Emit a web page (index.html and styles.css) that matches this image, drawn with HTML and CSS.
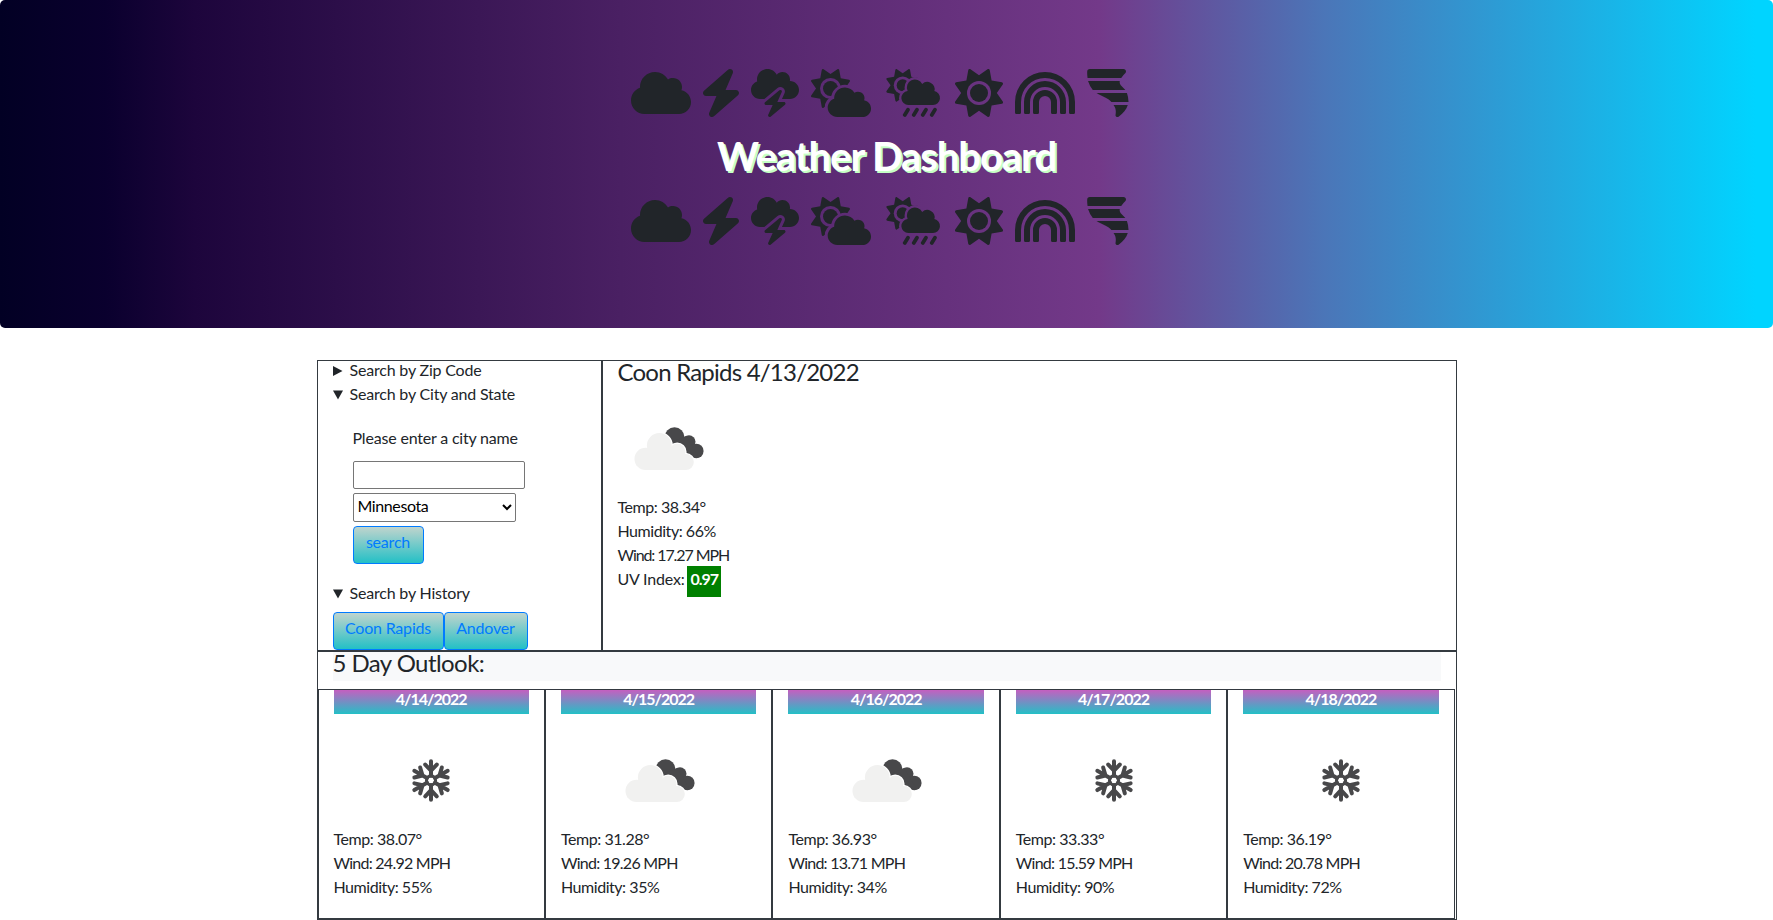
FILE: index.html
```html
<!DOCTYPE html>
<html lang="en">
<head>
<meta charset="utf-8">
<title>Weather Dashboard</title>
<link rel="stylesheet" href="styles.css">
</head>
<body>
<svg class="defs" width="0" height="0" aria-hidden="true">
  <defs>
    <path id="star" d="M509.3 347L446.1 256l63.2-91c6.300-9.100 1.100-21.700-9.900-23.700l-109-19.700l-19.700-109c-2-10.900-14.600-16.200-23.700-9.800L256 65.900L165 2.700c-9.100-6.300-21.700-1.100-23.700 9.800L121.600 121.600L12.600 141.300C1.600 143.200-3.600 155.900 2.700 165L65.900 256l-63.200 91c-6.300 9.100-1.100 21.700 9.900 23.700l109 19.700l19.700 109c2 10.900 14.600 16.200 23.700 9.800L256 446.100l91 63.200c9.100 6.300 21.800 1.100 23.700-9.800l19.700-109l109-19.700C510.400 368.800 515.600 356.100 509.300 347z"/>
    <path id="cloudshape" d="M96.2 200.1C96.07 197.4 96 194.7 96 192C96 103.6 167.6 32 256 32C315.3 32 367 64.25 394.7 112.2C409.9 101.1 428.3 96 448 96C501 96 544 138.1 544 192C544 204.2 541.7 215.8 537.6 226.6C596 238.4 640 290.1 640 352C640 422.7 582.7 480 512 480H144C64.47 480 0 415.5 0 336C0 273.2 40.17 219.8 96.2 200.1z"/>
    <path id="raincloud" d="M271 384a75 75 0 0 1-8-149.600A84 84 0 0 1 418 161a78 78 0 0 1 130 74.600A75 75 0 0 1 533 384z"/>
    <mask id="mSun" maskUnits="userSpaceOnUse" x="0" y="0" width="512" height="512"><rect width="512" height="512" fill="#fff"/><circle cx="256" cy="256" r="128" fill="#000"/></mask>
    <mask id="mCs" maskUnits="userSpaceOnUse" x="0" y="0" width="640" height="512"><rect width="640" height="512" fill="#fff"/><use href="#cloudshape" transform="translate(178 176) scale(.722 .7)" stroke="#000" stroke-width="88"/></mask>
    <mask id="mCsRing" maskUnits="userSpaceOnUse" x="0" y="0" width="640" height="512"><rect width="640" height="512" fill="#fff"/><circle cx="208" cy="208" r="112" fill="#000"/></mask>
    <mask id="mCr" maskUnits="userSpaceOnUse" x="0" y="0" width="640" height="512"><rect width="640" height="512" fill="#fff"/><use href="#raincloud" stroke="#000" stroke-width="50"/></mask>
    <mask id="mCrRing" maskUnits="userSpaceOnUse" x="0" y="0" width="640" height="512"><rect width="640" height="512" fill="#fff"/><circle cx="210" cy="174" r="95" fill="#000"/></mask>

    <symbol id="i-cloud" viewBox="0 0 640 512"><use href="#cloudshape"/></symbol>
    <symbol id="i-bolt" viewBox="0 0 384 512"><path d="M240.5 224H352C365.3 224 377.3 232.3 381.1 244.7C386.6 257.2 383.1 271.3 373.1 280.1L117.1 504.1C105.8 513.9 89.27 514.7 77.19 505.9C65.1 497.1 60.7 481.1 66.59 467.4L143.5 288H31.1C18.67 288 6.733 279.7 2.044 267.3C-2.645 254.8 .8944 240.7 10.93 231.9L266.9 7.918C278.2-1.92 294.7-2.669 306.8 6.114C318.9 14.9 323.3 30.87 317.4 44.61L240.5 224z"/></symbol>
    <symbol id="i-storm" viewBox="0 0 512 512"><path d="M352 351.1h-71.25l47.44-105.4c3.062-6.781 1.031-14.81-4.906-19.31c-5.969-4.469-14.22-4.312-19.94 .4687l-153.6 128c-5.156 4.312-7.094 11.41-4.781 17.72c2.281 6.344 8.281 10.56 15.03 10.56h71.25l-47.44 105.4c-3.062 6.781-1.031 14.81 4.906 19.31C191.6 510.9 194.1 512 198.4 512c3.656 0 7.281-1.25 10.25-3.719l153.6-128c5.156-4.312 7.094-11.41 4.781-17.72C364.8 356.2 358.8 351.1 352 351.1zM416 128c-.625 0-1.125 .25-1.625 .25C415.5 123 416 117.6 416 112C416 67.75 380.3 32 336 32c-24.62 0-46.25 11.25-61 28.75C256.4 24.75 219.3 0 176 0C114.1 0 64 50.13 64 112c0 7.25 .75 14.25 2.125 21.25C27.75 145.8 0 181.5 0 224c0 53 43 96 96 96h46.63l140.2-116.8c8.605-7.195 19.53-11.16 30.76-11.16c10.34 0 20.6 3.416 29.03 9.734c17.96 13.61 24.02 37.45 14.76 57.95L330.2 320H416c53 0 96-43 96-96S469 128 416 128z"/></symbol>
    <symbol id="i-cloudsun" viewBox="0 0 640 512"><g mask="url(#mCs)"><g mask="url(#mCsRing)"><use href="#star" transform="scale(.8125)"/></g><circle cx="208" cy="208" r="80"/></g><use href="#cloudshape" transform="translate(178 176) scale(.722 .7)"/></symbol>
    <symbol id="i-sunrain" viewBox="0 0 640 512"><g mask="url(#mCr)"><g mask="url(#mCrRing)"><use href="#star" transform="translate(36 0) scale(.68)"/></g><circle cx="210" cy="174" r="64"/></g><use href="#raincloud"/><path d="M266 434l-34 56M362 434l-34 56M458 434l-34 56M554 434l-34 56" stroke="currentColor" stroke-width="40" stroke-linecap="round"/></symbol>
    <symbol id="i-sun" viewBox="0 0 512 512"><use href="#star" mask="url(#mSun)"/><circle cx="256" cy="256" r="96"/></symbol>
    <symbol id="i-rainbow" viewBox="0 0 640 512"><path d="M0 352a320 320 0 0 1 640 0v112a16 16 0 0 1-16 16h-32a16 16 0 0 1-16-16V352a256 256 0 0 0-512 0v112a16 16 0 0 1-16 16H16a16 16 0 0 1-16-16zM96 352a224 224 0 0 1 448 0v112a16 16 0 0 1-16 16h-32a16 16 0 0 1-16-16V352a160 160 0 0 0-320 0v112a16 16 0 0 1-16 16h-32a16 16 0 0 1-16-16zM192 352a128 128 0 0 1 256 0v112a16 16 0 0 1-16 16h-32a16 16 0 0 1-16-16V352a64 64 0 0 0-128 0v112a16 16 0 0 1-16 16h-32a16 16 0 0 1-16-16z"/></symbol>
    <symbol id="i-tornado" viewBox="0 0 448 512"><path d="M2 28C2 12 13 0 30 0H388C412 0 424 24 410 42Q384 66 365 96H6Q1 62 2 28zM11 128H350Q344 150 360 174L409 224H62Q27 180 11 128zM102 256H426Q442 300 443 352H260C224 308 158 294 102 256zM283 384H435C422 430 384 474 340 506C324 518 304 508 304 492C310 452 310 418 283 384z"/></symbol>

    <symbol id="w-cloud" viewBox="0 0 100 100">
      <g fill="#48484a"><circle cx="56.500" cy="39.200" r="10"/><circle cx="71" cy="43.800" r="6.500"/><circle cx="78.300" cy="53" r="7.300"/><path d="M54 44L68 38L80 58L70 56z"/></g>
      <g fill="#fff" stroke="#fff" stroke-width="2.400"><circle cx="41.300" cy="47.500" r="12.400"/><circle cx="59.200" cy="54" r="8.200"/><circle cx="67.800" cy="64.200" r="8"/></g>
      <g fill="#f1f1f0"><circle cx="27.600" cy="60.900" r="11.100"/><circle cx="41.300" cy="47.500" r="12.400"/><circle cx="59.200" cy="54" r="8.200"/><circle cx="67.800" cy="64.100" r="8"/><path d="M27.600 50L60 50L67.800 58V72.100H27.600z"/></g>
    </symbol>
    <g id="arm"><path d="M0-4.500V-18.700M0-9.500L-5.600-15.400M0-9.500L5.600-15.400"/></g>
    <symbol id="w-snow" viewBox="0 0 100 100"><g transform="translate(50 50.400) scale(1.030)" fill="none" stroke="#48484a" stroke-width="3.900" stroke-linecap="round"><circle r="4.400" stroke-width="3"/><use href="#arm"/><use href="#arm" transform="rotate(60)"/><use href="#arm" transform="rotate(120)"/><use href="#arm" transform="rotate(180)"/><use href="#arm" transform="rotate(240)"/><use href="#arm" transform="rotate(300)"/></g></symbol>
  </defs>
</svg>

<header class="jumbotron">
  <div class="icons">
    <svg width="60" height="48"><use href="#i-cloud"/></svg>
    <svg width="36" height="48"><use href="#i-bolt"/></svg>
    <svg width="48" height="48"><use href="#i-storm"/></svg>
    <svg width="60" height="48"><use href="#i-cloudsun"/></svg>
    <svg width="60" height="48"><use href="#i-sunrain"/></svg>
    <svg width="48" height="48"><use href="#i-sun"/></svg>
    <svg width="60" height="48"><use href="#i-rainbow"/></svg>
    <svg width="42" height="48"><use href="#i-tornado"/></svg>
  </div>
  <h1 class="title">Weather Dashboard</h1>
  <div class="icons">
    <svg width="60" height="48"><use href="#i-cloud"/></svg>
    <svg width="36" height="48"><use href="#i-bolt"/></svg>
    <svg width="48" height="48"><use href="#i-storm"/></svg>
    <svg width="60" height="48"><use href="#i-cloudsun"/></svg>
    <svg width="60" height="48"><use href="#i-sunrain"/></svg>
    <svg width="48" height="48"><use href="#i-sun"/></svg>
    <svg width="60" height="48"><use href="#i-rainbow"/></svg>
    <svg width="42" height="48"><use href="#i-tornado"/></svg>
  </div>
</header>

<main class="container">
  <div class="top">
    <aside class="search">
      <div class="line summary"><svg class="marker" width="10" height="10"><path d="M0 0L9.500 5L0 10z"/></svg><span>Search by Zip Code</span></div>
      <div class="line summary"><svg class="marker" width="10" height="10"><path d="M0 .5H10L5 9.500z"/></svg><span>Search by City and State</span></div>
      <form class="cityform">
        <label class="line" for="city">Please enter a city name</label>
        <input class="field" id="city" type="text">
        <select class="state"><option>Minnesota</option></select>
        <button class="btn" type="button">search</button>
      </form>
      <div class="line summary"><svg class="marker" width="10" height="10"><path d="M0 .5H10L5 9.500z"/></svg><span>Search by History</span></div>
      <div class="history"><button class="btn coon" type="button">Coon Rapids</button><button class="btn andover" type="button">Andover</button></div>
    </aside>
    <section class="current">
      <h2 class="heading">Coon Rapids 4/13/2022</h2>
      <svg class="wicon" width="100" height="100"><use href="#w-cloud"/></svg>
      <div class="line reading">Temp: 38.34°</div>
      <div class="line reading">Humidity: 66%</div>
      <div class="line wind">Wind: 17.27 MPH</div>
      <div class="line">UV Index: <span class="uv">0.97</span></div>
    </section>
  </div>
  <section class="outlook">
    <h2 class="heading bar">5 Day Outlook:</h2>
    <div class="cards">
      <article class="card"><h3 class="date">4/14/2022</h3><svg class="wicon" width="100" height="100"><use href="#w-snow"/></svg><div class="line reading">Temp: 38.07°</div><div class="line wind">Wind: 24.92 MPH</div><div class="line reading">Humidity: 55%</div></article>
      <article class="card"><h3 class="date">4/15/2022</h3><svg class="wicon" width="100" height="100"><use href="#w-cloud"/></svg><div class="line reading">Temp: 31.28°</div><div class="line wind">Wind: 19.26 MPH</div><div class="line reading">Humidity: 35%</div></article>
      <article class="card"><h3 class="date">4/16/2022</h3><svg class="wicon" width="100" height="100"><use href="#w-cloud"/></svg><div class="line reading">Temp: 36.93°</div><div class="line wind">Wind: 13.71 MPH</div><div class="line reading">Humidity: 34%</div></article>
      <article class="card"><h3 class="date">4/17/2022</h3><svg class="wicon" width="100" height="100"><use href="#w-snow"/></svg><div class="line reading">Temp: 33.33°</div><div class="line wind">Wind: 15.59 MPH</div><div class="line reading">Humidity: 90%</div></article>
      <article class="card"><h3 class="date">4/18/2022</h3><svg class="wicon" width="100" height="100"><use href="#w-snow"/></svg><div class="line reading">Temp: 36.19°</div><div class="line wind">Wind: 20.78 MPH</div><div class="line reading">Humidity: 72%</div></article>
    </div>
  </section>
</main>
</body>
</html>
```
FILE: styles.css
```css
*, *::before, *::after { box-sizing: border-box; }
html { overflow: hidden; }
body { margin: 0; background: #fff; color: #212529; font-family: Lato, sans-serif; font-size: 16px; letter-spacing: -.19px; }
svg { display: block; fill: currentColor; flex: none; }
.defs { display: block; height: 0; }
.jumbotron { height: 328px; margin-bottom: 32px; padding-top: 69px; border-radius: 5px; background: linear-gradient(90deg, #020024 0%, #0a002e 6%, #1d053c 11%, #4a2063 35%, #733989 62%, #4a77b9 75%, #00d4ff 99%); }
.icons { display: flex; justify-content: center; gap: 12px; padding-right: 13px; }
.title { margin: 0; height: 80px; padding-top: 15px; text-align: center; font-size: 40px; font-weight: 700; line-height: 48px; color: #fff; text-shadow: 2px 2px 0 #c5ffc5; letter-spacing: -1.05px; }
.container { width: 1140px; margin: 0 auto; }
.top { display: flex; height: 291px; }
.search { width: 285px; padding: 0 15px; border: 1px solid #343a40; }
.current { flex: 1; padding: 0 15px; border: 1px solid #343a40; }
.line { display: block; height: 24px; line-height: 18px; white-space: nowrap; }
.reading { letter-spacing: -.45px; }
.wind { letter-spacing: -.75px; }
.current .wind { letter-spacing: -1.1px; }
.summary { display: flex; gap: 7px; }
.marker { margin-top: 5px; }
.cityform { display: flex; flex-direction: column; align-items: flex-start; padding: 20px 20px; }
.field { width: 172px; height: 28px; margin: 8px 0 4px; border: 1px solid #767676; border-radius: 2px; background: #fff; }
.state { width: 163px; height: 29px; margin: 0 0 4px; padding: 0 0 4px; border: 1px solid #767676; border-radius: 2px; background-color: #fff; color: #000; font: inherit; letter-spacing: -.4px; }
.btn { height: 38px; margin: 0; padding: 0 11px 7px; border: 1px solid #007bff; border-radius: 4px; background: linear-gradient(#c0d4cd, #23c0c6); color: #007bff; font: inherit; letter-spacing: -.2px; white-space: nowrap; }
.cityform .btn { width: 71px; }
.history { display: flex; padding-top: 4px; }
.coon { width: 111px; }
.andover { width: 84px; }
.heading { margin: 0 0 8px; height: 29px; font-size: 24px; font-weight: 400; line-height: 21px; letter-spacing: -.78px; white-space: nowrap; }
.uv { margin-left: -1px; padding: 3px 3px 9px; background: #008000; color: #fff; font-weight: 700; letter-spacing: -1px; }
.outlook { height: 269px; border: 1px solid #343a40; }
.bar { margin: 0 15px 8px; background: #f8f9fa; letter-spacing: -.57px; }
.cards { display: grid; grid-template-columns: repeat(5, 227.45px); height: 230px; }
.card { padding: 0 15px; border: 1px solid #343a40; }
.date { height: 24px; margin: 0 0 16px; background: linear-gradient(#c45fc0, #23c0c6); color: #fff; font-size: 16px; font-weight: 700; line-height: 18px; letter-spacing: -1px; text-align: center; }
.card .wicon { margin: 0 auto; }
```
